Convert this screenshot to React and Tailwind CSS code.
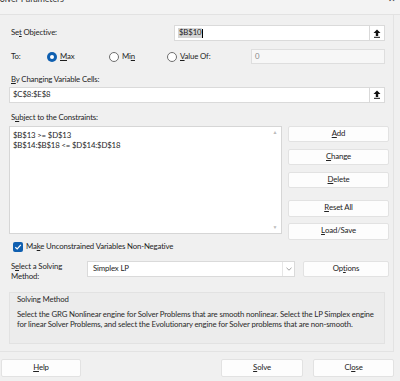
import React from "react";

const font = { fontFamily: 'Lato, "Liberation Sans", Arial, sans-serif' };

function U({ children }) {
  return <span className="underline underline-offset-[1px]">{children}</span>;
}

function RefButton() {
  return (
    <div className="w-[15px] h-full border-l border-[#d9d9d9] flex items-center justify-center">
      <svg width="8" height="9" viewBox="0 0 8 9">
        <path d="M4 0.5 L7.5 4 L5.2 4 L5.2 7 L2.8 7 L2.8 4 L0.5 4 Z" fill="#111" />
        <rect x="1" y="7.8" width="6" height="1" fill="#111" />
      </svg>
    </div>
  );
}

function Radio({ checked, children }) {
  return (
    <div className="flex items-center gap-[3px]">
      {checked ? (
        <span className="w-[10px] h-[10px] rounded-full bg-[#0f5fb0] flex items-center justify-center">
          <span className="w-[4px] h-[4px] rounded-full bg-white" />
        </span>
      ) : (
        <span className="w-[10px] h-[10px] rounded-full border border-[#6e6e6e] bg-white" />
      )}
      <span>{children}</span>
    </div>
  );
}

function Btn({ children, className = "" }) {
  return (
    <div
      className={`bg-[#fdfdfd] border border-[#e2e2e2] rounded-[2px] flex items-center justify-center text-[#222] ${className}`}
    >
      {children}
    </div>
  );
}

export default function App() {
  return (
    <div
      className="w-[400px] h-[381px] bg-[#f0f0f0] overflow-hidden flex flex-col text-[7.8px] tracking-[-0.15px] text-[#1e1e1e] leading-none"
      style={font}
    >
      {/* Title bar */}
      <div className="h-[15px] shrink-0 bg-[#f3f3f3] border-b border-[#e2e2e2] flex justify-between overflow-hidden">
        <span className="-mt-[6px] -ml-[5px] text-[9px] text-[#333]">Solver Parameters</span>
        <span className="-mt-[6px] mr-[4px] text-[9px] text-[#333]">✕</span>
      </div>

      <div className="flex-1 min-h-0 w-[394px] border-r border-b border-[#e3e3e3] pl-[9px] pr-[4px]">
        {/* Set Objective */}
        <div className="mt-[10px] h-[16px] flex items-center">
          <span className="pl-[2px] w-[165px]">
            Se<U>t</U> Objective:
          </span>
          <div className="w-[211px] h-[16px] bg-white border border-[#dadada] flex items-stretch">
            <div className="flex-1 flex items-center pl-[3px]">
              <span className="bg-[#d5d5d5] text-[#222] px-[1px] py-[1px]">$B$10</span>
              <span className="w-px h-[9px] bg-black" />
            </div>
            <RefButton />
          </div>
        </div>

        {/* To */}
        <div className="mt-[8px] h-[15px] flex items-center">
          <span className="pl-[2px] w-[38px]">To:</span>
          <div className="w-[62px]">
            <Radio checked>
              <U>M</U>ax
            </Radio>
          </div>
          <div className="w-[58px]">
            <Radio>
              Mi<U>n</U>
            </Radio>
          </div>
          <div className="w-[84px]">
            <Radio>
              <U>V</U>alue Of:
            </Radio>
          </div>
          <div className="w-[134px] h-[15px] bg-[#f7f7f7] border border-[#dedede] flex items-center pl-[3px] text-[#888]">
            0
          </div>
        </div>

        {/* By Changing */}
        <div className="mt-[12px] pl-[2px]">
          <U>B</U>y Changing Variable Cells:
        </div>
        <div className="mt-[3px] w-[376px] h-[16px] bg-white border border-[#dadada] flex items-stretch">
          <div className="flex-1 flex items-center pl-[3px]">$C$8:$E$8</div>
          <RefButton />
        </div>

        {/* Constraints */}
        <div className="mt-[11px] pl-[2px]">
          S<U>u</U>bject to the Constraints:
        </div>
        <div className="mt-[4px] flex gap-[6px]">
          <div className="w-[273px] h-[108px] bg-white border border-[#d6d6d6] flex">
            <div className="flex-1 pl-[3px] pt-[3px] leading-[10px]">
              <div>$B$13 &gt;= $D$13</div>
              <div>$B$14:$B$18 &lt;= $D$14:$D$18</div>
            </div>
            <div className="w-[12px] flex flex-col justify-between items-center py-[3px] text-[5px] text-[#bbb]">
              <span>▲</span>
              <span>▼</span>
            </div>
          </div>
          <div className="w-[101px] flex flex-col">
            <Btn className="h-[16px]">
              <U>A</U>dd
            </Btn>
            <Btn className="mt-[7px] h-[16px]">
              <U>C</U>hange
            </Btn>
            <Btn className="mt-[7px] h-[16px]">
              <U>D</U>elete
            </Btn>
            <Btn className="mt-[12px] h-[17px]">
              <U>R</U>eset All
            </Btn>
            <Btn className="mt-[6px] h-[17px]">
              <U>L</U>oad/Save
            </Btn>
          </div>
        </div>

        {/* Checkbox */}
        <div className="mt-[2px] flex items-center gap-[3px] pl-[4px]">
          <span className="w-[10px] h-[10px] rounded-[2px] bg-[#0f5fb0] flex items-center justify-center">
            <svg width="8" height="8" viewBox="0 0 8 8">
              <path d="M1.3 4.2 L3.2 6 L6.8 1.8" stroke="#fff" strokeWidth="1.2" fill="none" />
            </svg>
          </span>
          <span>
            Ma<U>k</U>e Unconstrained Variables Non-Negative
          </span>
        </div>

        {/* Solving method select */}
        <div className="mt-[9px] flex items-start">
          <div className="w-[78px] pl-[2px] leading-[10px]">
            S<U>e</U>lect a Solving
            <br />
            Method:
          </div>
          <div className="w-[208px] h-[16px] bg-white border border-[#dadada] flex items-stretch">
            <div className="flex-1 flex items-center pl-[5px]">Simplex LP</div>
            <div className="w-[12px] border-l border-[#e6e6e6] flex items-center justify-center">
              <svg width="6" height="4" viewBox="0 0 6 4">
                <path d="M0.5 0.8 L3 3.2 L5.5 0.8" stroke="#888" strokeWidth="0.8" fill="none" />
              </svg>
            </div>
          </div>
          <Btn className="ml-[8px] w-[86px] h-[16px]">
            Op<U>t</U>ions
          </Btn>
        </div>

        {/* Solving method group */}
        <div className="mt-[11px] w-[376px] h-[52px] bg-[#ececec] border border-[#e2e2e2] px-[7px] pt-[3px] text-[#2a2a2a]">
          <div>Solving Method</div>
          <div className="mt-[7px] leading-[9.5px]">
            Select the GRG Nonlinear engine for Solver Problems that are smooth nonlinear. Select the LP Simplex engine
            for linear Solver Problems, and select the Evolutionary engine for Solver problems that are non-smooth.
          </div>
        </div>
      </div>

      {/* Bottom buttons */}
      <div className="shrink-0 mt-[7px] mb-[4px] h-[18px] flex pl-[1px]">
        <Btn className="w-[80px] h-[18px]">
          <U>H</U>elp
        </Btn>
        <Btn className="ml-[140px] w-[82px] h-[18px] border-[#7f96a8]">
          <U>S</U>olve
        </Btn>
        <Btn className="ml-[10px] w-[81px] h-[18px]">
          Cl<U>o</U>se
        </Btn>
      </div>
    </div>
  );
}
